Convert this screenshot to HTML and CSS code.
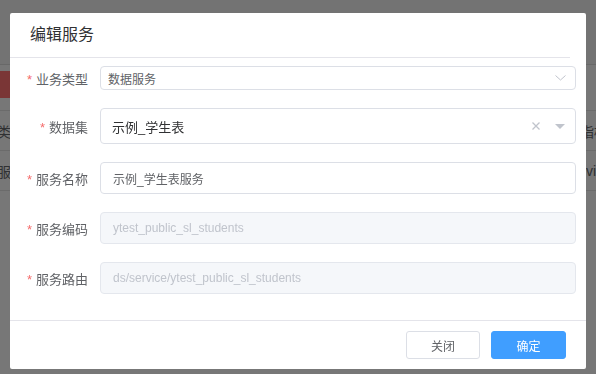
FILE: index.html
```html
<!doctype html>
<html lang="zh-CN">
  <head>
    <meta charset="UTF-8" />
    <meta name="viewport" content="width=device-width, initial-scale=1.0" />
    <title>编辑服务</title>
    <link rel="stylesheet" href="styles.css">
  </head>
  <body>
    <!-- page behind the modal -->
    <div class="page">
      <div class="topbar"></div>
      <div class="toolbar"><span class="btn-danger"></span></div>
      <div class="table-row">
        <span class="cell-left">类型</span>
        <span class="cell-right">指标</span>
      </div>
      <div class="table-row">
        <span class="cell-left">服务</span>
        <span class="cell-right cell-en">service</span>
      </div>
    </div>

    <div class="mask"></div>

    <div class="dialog">
      <div class="dialog-header">编辑服务</div>

      <div class="dialog-body">
        <div class="form-row">
          <label class="form-label"><i>*</i>业务类型</label>
          <div class="control select select-small">
            <span class="value">数据服务</span>
            <svg class="chevron" width="11" height="6" viewBox="0 0 11 6">
              <path d="M0.5 0.5 L5.5 5 L10.5 0.5" fill="none" stroke="#c0c4cc" stroke-width="1"/>
            </svg>
          </div>
        </div>

        <div class="form-row">
          <label class="form-label"><i>*</i>数据集</label>
          <div class="control select select-large">
            <span class="value">示例_学生表</span>
            <svg class="clear" width="8" height="8" viewBox="0 0 8 8">
              <path d="M0.5 0.5 L7.5 7.5 M7.5 0.5 L0.5 7.5" stroke="#c0c4cc" stroke-width="1.3"/>
            </svg>
            <svg class="caret" width="10" height="5" viewBox="0 0 10 5">
              <path d="M0 0 H10 L5 5 Z" fill="#c0c4cc"/>
            </svg>
          </div>
        </div>

        <div class="form-row">
          <label class="form-label"><i>*</i>服务名称</label>
          <div class="control input">示例_学生表服务</div>
        </div>

        <div class="form-row">
          <label class="form-label"><i>*</i>服务编码</label>
          <div class="control input is-disabled">ytest_public_sl_students</div>
        </div>

        <div class="form-row">
          <label class="form-label"><i>*</i>服务路由</label>
          <div class="control input is-disabled">ds/service/ytest_public_sl_students</div>
        </div>
      </div>

      <div class="dialog-footer">
        <button class="btn">关闭</button>
        <button class="btn btn-primary">确定</button>
      </div>
    </div>
  </body>
</html>
```

FILE: styles.css
```css
body {
  margin: 0;
  font-family: 'Liberation Sans', 'Noto Sans CJK SC', sans-serif;
  background-color: #eeeeee;
  color: #606266;
  overflow: hidden;
}

/* background page */
.page {
  height: 374px;
}
.topbar {
  height: 64px;
  background-color: #e6e6e6;
  border-bottom: 1px solid #d0d0d0;
}
.toolbar {
  padding-top: 6px;
  height: 39px;
  border-bottom: 1px solid #d6d6d6;
}
.btn-danger {
  display: inline-block;
  width: 60px;
  height: 27px;
  background-color: #f56c6c;
}
.table-row {
  display: flex;
  justify-content: space-between;
  height: 39px;
  align-items: center;
  border-bottom: 1px solid #d6d6d6;
  font-size: 14px;
  color: #606266;
}
.cell-left {
  margin-left: -3px;
}
.cell-right {
  margin-right: -12px;
}
.cell-en {
  margin-right: -15px;
}

.mask {
  position: fixed;
  inset: 0;
  background-color: rgba(0, 0, 0, 0.5);
}

/* dialog */
.dialog {
  position: absolute;
  left: 10px;
  top: 13px;
  width: 576px;
  background-color: #fff;
  border-radius: 2px;
}
.dialog-header {
  height: 44px;
  line-height: 44px;
  padding-left: 20px;
  margin-right: 16px;
  font-size: 16px;
  color: #303133;
  border-bottom: 1px solid #e4e4ea;
}
.dialog-body {
  display: flex;
  flex-direction: column;
  gap: 18px;
  padding: 8px 10px 26px 0;
}
.form-row {
  display: flex;
  align-items: center;
}
.form-label {
  width: 78px;
  padding-right: 12px;
  text-align: right;
  font-size: 13px;
  color: #606266;
}
.form-label i {
  font-style: normal;
  color: #f56c6c;
  margin-right: 4px;
}
.control {
  flex: 1;
  box-sizing: border-box;
  display: flex;
  align-items: center;
  border: 1px solid #dcdfe6;
  border-radius: 4px;
  background-color: #fff;
}
.select .value {
  flex: 1;
}
.select-small {
  height: 24px;
  padding: 0 9px 0 7px;
  font-size: 12px;
  color: #606266;
}
.select-large {
  height: 36px;
  padding: 0 10px 0 11px;
  font-size: 13px;
  color: #303133;
}
.clear {
  margin-right: 15px;
}
.input {
  height: 32px;
  padding: 0 12px;
  font-size: 12px;
  color: #606266;
}
.input.is-disabled {
  background-color: #f5f7fa;
  border-color: #e4e7ed;
  color: #c0c4cc;
}

.dialog-footer {
  display: flex;
  justify-content: flex-end;
  gap: 11px;
  padding: 10px 20px;
  border-top: 1px solid #e4e4ea;
}
.btn {
  width: 74px;
  height: 28px;
  font-family: inherit;
  font-size: 12px;
  color: #606266;
  background-color: #fff;
  border: 1px solid #dcdfe6;
  border-radius: 3px;
  cursor: pointer;
}
.btn-primary {
  width: 75px;
  color: #fff;
  background-color: #409eff;
  border-color: #409eff;
}
```
